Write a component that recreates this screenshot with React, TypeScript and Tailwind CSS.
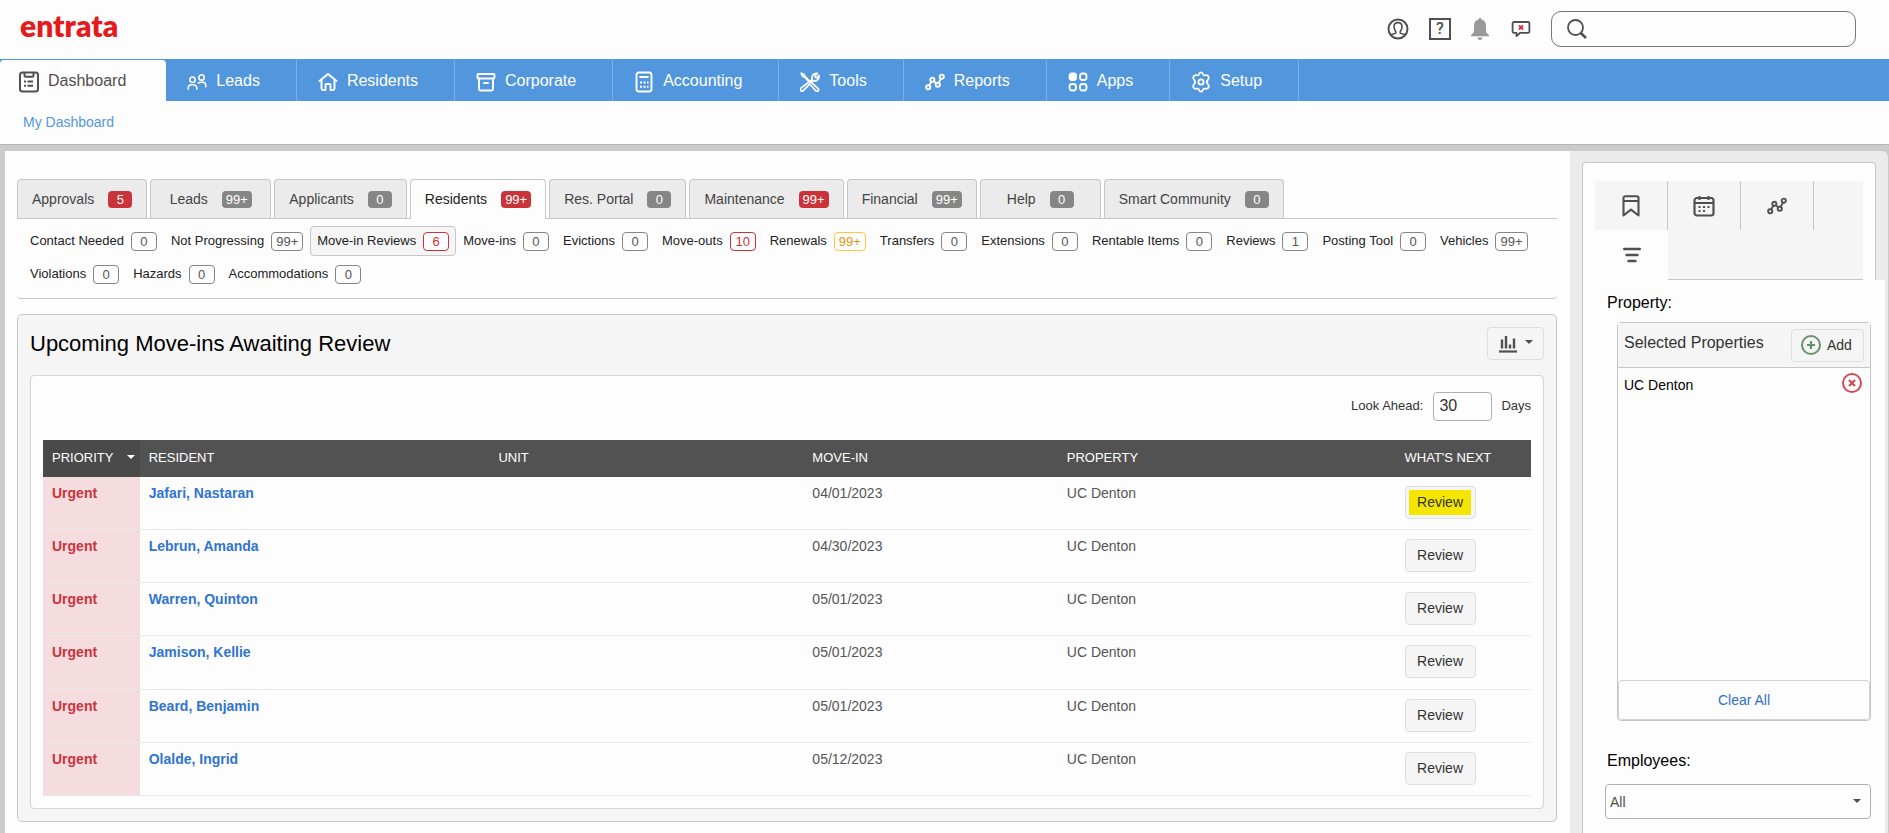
import type { ReactNode } from 'react';
import clsx from 'clsx';

type IconProps = { className?: string };

const DashboardIcon = () => (
  <svg width="20" height="22" viewBox="0 0 20 22" fill="none" stroke="currentColor">
    <rect x="1" y="1.5" width="18" height="19" rx="2.5" strokeWidth="2" />
    <path d="M5.5 2v2.2a1.5 1.5 0 0 0 1.5 1.5h6a1.5 1.5 0 0 0 1.5-1.5V2" strokeWidth="2" />
    <path d="M5 10.5h2M8.5 10.5H14M5 14.8h2M8.5 14.8H14" strokeWidth="2" />
  </svg>
);

const LeadsIcon = () => (
  <svg width="22" height="20" viewBox="0 0 22 20" fill="none" stroke="currentColor" strokeWidth="1.7" strokeLinecap="round">
    <circle cx="6" cy="7.5" r="3" />
    <circle cx="16" cy="5" r="3" />
    <path d="M1.3 18v-1.2A3.8 3.8 0 0 1 5 13h2a3.8 3.8 0 0 1 3.8 3.8V18" />
    <path d="M12.5 11.3c.6-.6 1.5-1 2.5-1h2a3.8 3.8 0 0 1 3.7 3.8v1.2" />
  </svg>
);

const HomeIcon = () => (
  <svg width="20" height="20" viewBox="0 0 20 20" fill="none" stroke="currentColor" strokeWidth="1.9" strokeLinecap="round" strokeLinejoin="round">
    <path d="M1.5 9 10 2l8.5 7" />
    <path d="M3.5 8v8.500a1.500 1.500 0 0 0 1.500 1.500h2.500v-5a1 1 0 0 1 1-1h3a1 1 0 0 1 1 1v5H15a1.500 1.500 0 0 0 1.500-1.500V8" />
  </svg>
);

const CorporateIcon = () => (
  <svg width="20" height="20" viewBox="0 0 20 20" fill="none" stroke="currentColor" strokeWidth="1.9" strokeLinecap="round" strokeLinejoin="round">
    <rect x="1.5" y="2" width="17" height="4.5" rx="1" />
    <path d="M3 6.5V17a1.500 1.500 0 0 0 1.500 1.500h11A1.500 1.500 0 0 0 17 17V6.500M8 11h4" />
  </svg>
);

const AccountingIcon = () => (
  <svg width="20" height="22" viewBox="0 0 20 22" fill="none" stroke="currentColor">
    <rect x="2.5" y="1.5" width="15" height="19" rx="2.5" strokeWidth="1.9" />
    <path d="M5.5 6h9" strokeWidth="2" />
    <path d="M6 11.5h2M9.5 11.5h2M13 11.5h1.5M6 15.8h2M9.5 15.8h2M13 15.8h1.5" strokeWidth="2" />
  </svg>
);

const ToolsIcon = () => (
  <svg width="20" height="20" viewBox="0 0 20 20" fill="none" stroke="currentColor" strokeWidth="1.7" strokeLinejoin="round" strokeLinecap="round">
    <path d="M12.3 7.5c-.6-1.6-.4-3.5.9-4.9 1.1-1.1 2.7-1.6 4.2-1.2L15 3.8l.3 1.6 1.6.3 2.1-2.2c.3 1.4-.1 3-1.3 4.2-1.2 1.2-3 1.6-4.500 1L5.200 16.700l-1.900 1.900a1.700 1.700 0 0 1-2.400-2.500z" />
    <path d="M1.2 1.2 4 2.300l1.200 2.300L9 8.500M1.200 1.200l1.300 3 2.300 1L8.300 9" />
    <path d="m12.500 11.500 5.700 5.200a1.600 1.600 0 0 1-2.200 2.300l-5.200-5.600" />
  </svg>
);

const ReportsIcon = () => (
  <svg width="20" height="20" viewBox="0 0 20 20" fill="none" stroke="currentColor" strokeWidth="1.9">
    <circle cx="3.2" cy="15.3" r="2.1" />
    <circle cx="7.3" cy="7.8" r="2.1" />
    <circle cx="12.8" cy="12.8" r="2.1" />
    <circle cx="16.8" cy="4.7" r="2.1" />
    <path d="m4.2 13.4 2.1-3.7M8.9 9.2l2.3 2.2M13.7 10.9l2.2-4.3" />
  </svg>
);

const AppsIcon = () => (
  <svg width="20" height="20" viewBox="0 0 20 20" fill="none" stroke="currentColor" strokeWidth="1.8">
    <rect x="1.5" y="1.5" width="6.5" height="6.5" rx="2" fill="currentColor" />
    <rect x="12" y="1.5" width="6.5" height="6.5" rx="2.5" />
    <rect x="1.5" y="12" width="6.5" height="6.5" rx="2.5" />
    <rect x="12" y="12" width="6.5" height="6.5" rx="2.5" />
  </svg>
);

const SetupIcon = () => (
  <svg width="20" height="22" viewBox="0 0 20 22" fill="none" stroke="currentColor" strokeWidth="1.8" strokeLinejoin="round">
    <path d="M8 3.2C8.4 1.9 9 1.3 10 1.3s1.600.6 2 1.900c.3.900 1.100 1.300 2 1.100 1.500-.3 2.700-.2 3.500 1.200.8 1.300.5 2.200-.5 3.200-1.400 1.400-1.400 3.200 0 4.600 1 1 1.300 1.900.5 3.200-.8 1.400-2 1.500-3.500 1.200-.9-.2-1.700.2-2 1.100-.4 1.300-1 1.900-2 1.900s-1.600-.6-2-1.900c-.3-.9-1.100-1.300-2-1.100-1.500.3-2.700.2-3.500-1.200-.8-1.300-.5-2.200.5-3.200 1.400-1.400 1.400-3.200 0-4.600-1-1-1.300-1.900-.5-3.200C3.300 4.100 4.500 4 6 4.300c.9.200 1.700-.2 2-1.100z" />
    <circle cx="10" cy="11" r="2.6" />
  </svg>
);

const UserIcon = () => (
  <svg width="22" height="22" viewBox="0 0 22 22" fill="none" stroke="currentColor" strokeWidth="1.6">
    <circle cx="11" cy="11" r="9.5" strokeWidth="2" />
    <path d="M3.500 17c1.300-.8 3.600-1 4.800-1.600.8-.5.700-1.400.2-2.200C7.300 11.500 7 10.200 7 8.800 7 6.200 8.700 4.600 11 4.600s4 1.600 4 4.200c0 1.400-.3 2.700-1.500 4.400-.5.800-.6 1.700.2 2.200 1.200.6 3.500.8 4.800 1.600" />
  </svg>
);

const BellIcon = () => (
  <svg width="18" height="22" viewBox="0 0 18 22" fill="currentColor">
    <path d="M9 0c.8 0 1.500.6 1.500 1.500 2.700.7 4.500 2.900 4.500 6v4.700c0 2 1 3.300 3 4.800v1.200H0V17c2-1.500 3-2.800 3-4.800V7.500c0-3.100 1.800-5.300 4.500-6C7.500.6 8.200 0 9 0zM6.500 19.500h5c-.2 1.500-1.200 2.500-2.500 2.500s-2.300-1-2.500-2.500z" />
  </svg>
);

const ChatIcon = () => (
  <svg width="20" height="18" viewBox="0 0 20 18" fill="none">
    <path d="M3 2h14a1.400 1.400 0 0 1 1.400 1.400v8A1.400 1.400 0 0 1 17 12.800H9.300L5.500 16v-3.200H3a1.400 1.400 0 0 1-1.400-1.400v-8A1.400 1.400 0 0 1 3 2z" stroke="#505050" strokeWidth="1.8" strokeLinejoin="round" />
    <path d="m8 5.500 4 4M12 5.500l-4 4" stroke="#d0303a" strokeWidth="1.8" />
  </svg>
);

const SearchIcon = () => (
  <svg width="20" height="20" viewBox="0 0 20 20" fill="none" stroke="#505050" className="shrink-0">
    <circle cx="8.500" cy="8.500" r="7.500" strokeWidth="1.8" />
    <path d="m13.800 14 5.200 5" strokeWidth="2.600" />
  </svg>
);

const BookmarkIcon = () => (
  <svg width="18" height="22" viewBox="0 0 18 22" fill="none" stroke="currentColor" strokeWidth="2.1" strokeLinejoin="round">
    <path d="M1.500 3A1.700 1.700 0 0 1 3.200 1.300h11.600A1.700 1.700 0 0 1 16.500 3v17.500L9 14.700l-7.500 5.800zM1.500 6h15" />
  </svg>
);

const CalendarIcon = () => (
  <svg width="22" height="22" viewBox="0 0 22 22" fill="none" stroke="currentColor">
    <rect x="1.500" y="3" width="19" height="17.500" rx="2.500" strokeWidth="2.200" />
    <path d="M2 8h18" strokeWidth="2" />
    <path d="M6.500 1v4M15.500 1v4" strokeWidth="2" />
    <path d="M5.500 12h2M10 12h2M14.500 12h2M5.500 16h2M10 16h2" strokeWidth="2" />
  </svg>
);

const FilterIcon = () => (
  <svg width="18" height="16" viewBox="0 0 18 16" stroke="currentColor" strokeWidth="2.4" strokeLinecap="round">
    <path d="M1.200 2h15.600M3.500 8h11M5.500 14h7" />
  </svg>
);

const ChartIcon = () => (
  <svg width="18" height="18" viewBox="0 0 18 18" stroke="currentColor">
    <path d="M3 4.500v9M7 1v12.500M11 9.500v4M15 3.500v10" strokeWidth="2.400" />
    <path d="M0 16.500h18" strokeWidth="2.200" />
  </svg>
);

const AddIcon = () => (
  <svg width="20" height="20" viewBox="0 0 20 20" fill="none" stroke="#67936a">
    <circle cx="10" cy="10" r="9" strokeWidth="2" />
    <path d="M10 6v8M6 10h8" strokeWidth="2.2" />
  </svg>
);

const RemoveIcon = () => (
  <svg width="20" height="20" viewBox="0 0 20 20" fill="none" stroke="#d34a55">
    <circle cx="10" cy="10" r="9" strokeWidth="2" />
    <path d="m7 7 6 6M13 7l-6 6" strokeWidth="2.2" />
  </svg>
);

const Caret = ({ className }: IconProps) => (
  <svg width="8" height="4" viewBox="0 0 8 4" fill="currentColor" className={className}>
    <path d="M0 0h8L4 4z" />
  </svg>
);

const navItems: { label: string; icon: ReactNode }[] = [
  { label: 'Dashboard', icon: <DashboardIcon /> },
  { label: 'Leads', icon: <LeadsIcon /> },
  { label: 'Residents', icon: <HomeIcon /> },
  { label: 'Corporate', icon: <CorporateIcon /> },
  { label: 'Accounting', icon: <AccountingIcon /> },
  { label: 'Tools', icon: <ToolsIcon /> },
  { label: 'Reports', icon: <ReportsIcon /> },
  { label: 'Apps', icon: <AppsIcon /> },
  { label: 'Setup', icon: <SetupIcon /> },
];

const tabs = [
  { label: 'Approvals', count: '5', alert: true },
  { label: 'Leads', count: '99+' },
  { label: 'Applicants', count: '0' },
  { label: 'Residents', count: '99+', alert: true, active: true },
  { label: 'Res. Portal', count: '0' },
  { label: 'Maintenance', count: '99+', alert: true },
  { label: 'Financial', count: '99+' },
  { label: 'Help', count: '0' },
  { label: 'Smart Community', count: '0' },
];

const filters = [
  { label: 'Contact Needed', count: '0' },
  { label: 'Not Progressing', count: '99+' },
  { label: 'Move-in Reviews', count: '6', tone: 'red', active: true },
  { label: 'Move-ins', count: '0' },
  { label: 'Evictions', count: '0' },
  { label: 'Move-outs', count: '10', tone: 'red' },
  { label: 'Renewals', count: '99+', tone: 'yellow' },
  { label: 'Transfers', count: '0' },
  { label: 'Extensions', count: '0' },
  { label: 'Rentable Items', count: '0' },
  { label: 'Reviews', count: '1' },
  { label: 'Posting Tool', count: '0' },
  { label: 'Vehicles', count: '99+' },
  { label: 'Violations', count: '0' },
  { label: 'Hazards', count: '0' },
  { label: 'Accommodations', count: '0' },
];

const residents = [
  { name: 'Jafari, Nastaran', moveIn: '04/01/2023', highlight: true },
  { name: 'Lebrun, Amanda', moveIn: '04/30/2023' },
  { name: 'Warren, Quinton', moveIn: '05/01/2023' },
  { name: 'Jamison, Kellie', moveIn: '05/01/2023' },
  { name: 'Beard, Benjamin', moveIn: '05/01/2023' },
  { name: 'Olalde, Ingrid', moveIn: '05/12/2023' },
];

const Header = () => (
  <header className="flex h-[59px] items-center justify-between pr-[33px] pb-0.5 pl-5">
    <a href="#" className="pb-2 font-['Lato',sans-serif] text-[30px] leading-8 font-extrabold text-[#e6191d]">
      entrata
    </a>
    <div className="flex items-center gap-5 text-[#505050]">
      <button type="button" aria-label="Account">
        <UserIcon />
      </button>
      <button
        type="button"
        className="flex size-[22px] items-center justify-center border-2 border-[#505050] font-['Roboto',sans-serif] text-base font-medium"
      >
        ?
      </button>
      <button type="button" aria-label="Notifications" className="w-5 text-[#999]">
        <BellIcon />
      </button>
      <button type="button" aria-label="Messages">
        <ChatIcon />
      </button>
      <label className="flex h-9 w-[305px] items-center rounded-[10px] border border-[#777] pl-[15px]">
        <SearchIcon />
        <input type="search" aria-label="Search" className="w-full bg-transparent px-3 text-sm outline-none" />
      </label>
    </div>
  </header>
);

const MainNav = () => (
  <nav className="flex h-[42px] border-t border-[#5297dd] bg-[#5297dd]">
    {navItems.map((item, i) => (
      <a
        key={item.label}
        href="#"
        className={clsx(
          'flex items-center gap-[9px] text-base',
          i === 0
            ? 'rounded-t bg-[#fdfdfd] pr-10 pl-[19px] text-[#505050]'
            : 'border-r border-[#7eb1e6] pr-9 pl-[21px] text-white'
        )}
      >
        <span className="flex w-5 shrink-0 justify-center pt-0.5">{item.icon}</span>
        {item.label}
      </a>
    ))}
  </nav>
);

const TabBar = () => (
  <div className="flex gap-[3px] border-b border-[#c6c6c6]">
    {tabs.map((tab) => (
      <button
        key={tab.label}
        type="button"
        className={clsx(
          'flex min-w-[121px] items-center justify-center gap-[14px] rounded-t border border-b-0 border-[#c6c6c6] px-[14px] text-sm',
          tab.active ? '-mb-px h-10 bg-[#fdfdfd] pb-px text-[#222]' : 'h-[39px] bg-[#ebebeb] text-[#444]'
        )}
      >
        {tab.label}
        <span
          className={clsx(
            'h-[17px] min-w-6 rounded px-1 text-center text-[13px] leading-[17px] text-white',
            tab.alert ? 'bg-[#cb333b]' : 'bg-[#868686]'
          )}
        >
          {tab.count}
        </span>
      </button>
    ))}
  </div>
);

const FilterBar = () => (
  <div className="flex flex-wrap gap-y-[3px] rounded-b border-b border-[#c6c6c6] pt-[7px] pb-[9px] pl-1.5">
    {filters.map((f) => (
      <a
        key={f.label}
        href="#"
        className={clsx(
          'flex h-[30px] items-center gap-[7px] rounded border px-1.5 text-[13px] text-[#222]',
          f.active ? 'border-[#c6c6c6] bg-[#f5f5f5]' : 'border-transparent'
        )}
      >
        {f.label}
        <span
          className={clsx(
            'h-[19px] min-w-[26px] rounded border bg-[#fdfdfd] px-1 text-center leading-[17px]',
            f.tone === 'red' && 'border-[#cb333b] text-[#cb333b]',
            f.tone === 'yellow' && 'border-[#fcc93c] text-[#dc9a14]',
            !f.tone && 'border-[#868686] text-[#555]'
          )}
        >
          {f.count}
        </span>
      </a>
    ))}
  </div>
);

const ReviewTable = () => (
  <table className="mt-[19px] h-[356px] w-full table-fixed text-left text-sm text-[#555]">
    <thead>
      <tr className="h-[37px] bg-[#525252] text-[13px] text-white uppercase">
        <th className="w-[6.5%] bg-[#4a4a4a] px-[9px] font-normal">
          <span className="flex items-center justify-between">
            Priority
            <Caret className="-mr-1 mb-1 shrink-0" />
          </span>
        </th>
        <th className="w-[23.5%] px-[9px] font-normal">Resident</th>
        <th className="w-[21.1%] px-[9px] font-normal">Unit</th>
        <th className="w-[17.1%] px-[9px] font-normal">Move-In</th>
        <th className="w-[22.7%] px-[9px] font-normal">Property</th>
        <th className="px-[9px] font-normal">What's Next</th>
      </tr>
    </thead>
    <tbody>
      {residents.map((r) => (
        <tr key={r.name} className="border-b border-[#e8e8e8] align-top">
          <td className="bg-[#f5dcde] px-[9px] pt-1.5 font-bold text-[#cb333b]">Urgent</td>
          <td className="px-[9px] pt-1.5">
            <a href="#" className="font-bold text-[#2f74d0]">
              {r.name}
            </a>
          </td>
          <td />
          <td className="px-[9px] pt-1.5">{r.moveIn}</td>
          <td className="px-[9px] pt-1.5">UC Denton</td>
          <td className="px-[9px] pt-[9px]">
            <button
              type="button"
              className="flex h-[33px] w-[71px] items-center justify-center rounded border border-[#dedede] bg-[#f5f5f5] text-[#333]"
            >
              <span className={clsx('px-2 leading-[25px]', r.highlight && 'bg-[#f5e600]')}>Review</span>
            </button>
          </td>
        </tr>
      ))}
    </tbody>
  </table>
);

const ReviewModule = () => (
  <section className="mt-[15px] rounded-[5px] border border-[#c6c6c6] bg-[#f5f5f5] px-3 pt-3 pb-3">
    <div className="flex items-start justify-between">
      <h2 className="text-[22px] leading-[34px] text-black">Upcoming Move-ins Awaiting Review</h2>
      <button
        type="button"
        aria-label="Chart options"
        className="flex h-[33px] w-[57px] items-center justify-center gap-2 rounded border border-[#dedede] text-[#505050]"
      >
        <ChartIcon />
        <Caret className="mb-1" />
      </button>
    </div>
    <div className="mt-[14px] rounded border border-[#d4d4d4] bg-[#fdfdfd] px-3 pt-4 pb-3">
      <div className="flex items-center justify-end text-[13px] text-[#333]">
        <label htmlFor="look-ahead" className="pb-0.5">
          Look Ahead:
        </label>
        <input
          id="look-ahead"
          type="text"
          defaultValue="30"
          className="mr-[9px] ml-[10px] h-[29px] w-[59px] rounded border border-[#b0b0b0] bg-[#fdfdfd] px-[5px] pb-0.5 text-base"
        />
        <span className="pb-0.5">Days</span>
      </div>
      <ReviewTable />
    </div>
  </section>
);

const sideTabs = [
  { label: 'Bookmarks', icon: <BookmarkIcon /> },
  { label: 'Calendar', icon: <CalendarIcon /> },
  { label: 'Reports', icon: <ReportsIcon /> },
];

const Sidebar = () => (
  <aside className="flex w-[318px] shrink-0 flex-col rounded-tr-md bg-[#ebebeb] pt-[11px] pr-3 pl-3">
    <div className="flex flex-1 flex-col rounded-t border border-b-0 border-[#c6c6c6] bg-[#fdfdfd] pt-[18px] text-[#505050]">
      <div className="mx-3 grid grid-cols-[73px_73px_73px_1fr]">
        {sideTabs.map((t) => (
          <button
            key={t.label}
            type="button"
            aria-label={t.label}
            className="flex h-[49px] items-center justify-center border-r border-[#c6c6c6] bg-[#f5f5f5]"
          >
            {t.icon}
          </button>
        ))}
        <span className="bg-[#f5f5f5]" />
        <button type="button" aria-label="Filters" className="flex h-[50px] items-center justify-center">
          <FilterIcon />
        </button>
        <span className="col-span-3 border-b border-[#c6c6c6] bg-[#f5f5f5]" />
      </div>

      <div className="-mr-[10px] flex-1 bg-[#fdfdfd] pt-[11px] pr-[14px] pl-[22px]">
        <h3 className="pl-[2px] text-base text-black">Property:</h3>
        <div className="mt-[7px] ml-3 flex h-[399px] flex-col rounded border border-[#c6c6c6]">
          <div className="flex h-[45px] items-center justify-between border-b border-[#c6c6c6] bg-[#f5f5f5] pr-1.5 pl-1.5">
            <span className="pb-1 text-base text-[#333]">Selected Properties</span>
            <button
              type="button"
              className="flex h-[33px] w-[73px] items-center gap-1.5 rounded border border-[#dedede] pl-[9px] text-sm text-[#333]"
            >
              <AddIcon />
              Add
            </button>
          </div>
          <div className="flex flex-1 items-start justify-between py-[5px] pr-2 pl-1.5 text-sm text-black">
            <span className="pt-0.5">UC Denton</span>
            <button type="button" aria-label="Remove UC Denton">
              <RemoveIcon />
            </button>
          </div>
          <button type="button" className="h-10 rounded border border-[#d4d4d4] text-sm text-[#3071cc]">
            Clear All
          </button>
        </div>

        <label htmlFor="employees" className="mt-7 block pl-[2px] text-base text-black">
          Employees:
        </label>
        <div className="relative mt-[11px] text-[#505050]">
          <select
            id="employees"
            className="h-[35px] w-full appearance-none rounded border border-[#b0b0b0] bg-[#fdfdfd] pl-1 text-sm"
          >
            <option>All</option>
          </select>
          <Caret className="pointer-events-none absolute top-[15px] right-[10px]" />
        </div>
      </div>
    </div>
  </aside>
);

const App = () => {
  return (
    <div className="flex min-h-screen flex-col bg-[#fdfdfd] font-['Liberation_Sans',Arial,sans-serif]">
      <Header />
      <MainNav />
      <div className="flex h-[43px] items-center pb-0.5 pl-[23px]">
        <a href="#" className="text-sm text-[#5297dd]">
          My Dashboard
        </a>
      </div>
      <div className="flex flex-1 border-t border-[#b5b5b5] bg-[#cbcbcb] pt-1.5 pr-px pl-[5px]">
        <main className="min-w-0 flex-1 bg-[#fdfdfd] pt-7 pr-[13px] pb-[10px] pl-3">
          <TabBar />
          <FilterBar />
          <ReviewModule />
        </main>
        <Sidebar />
      </div>
    </div>
  );
};

export default App;
